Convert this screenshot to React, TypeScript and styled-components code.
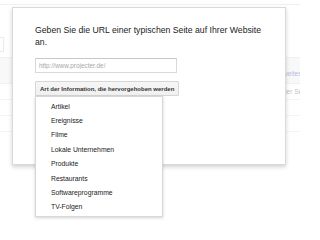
import React from 'react';
import styled, {createGlobalStyle} from "styled-components";

const GlobalStyle = createGlobalStyle`
  html, body {
    margin: 0;
    padding: 0;
    width: 300px;
    height: 223px;
    overflow: hidden;
    background: #ffffff;
  }
  body {
    font-family: "Liberation Sans", Arial, sans-serif;
  }
`

const types = [
    "Artikel",
    "Ereignisse",
    "Filme",
    "Lokale Unternehmen",
    "Produkte",
    "Restaurants",
    "Softwareprogramme",
    "TV-Folgen",
];

export default function App() {
    return (
        <Page>
            <GlobalStyle/>
            <TopBar/>
            <SearchRow><SearchStub/></SearchRow>
            <Band><Peek color={"#b7bce6"}>weitere</Peek></Band>
            <Row><Peek color={"#c2c2c2"}>der Seite</Peek></Row>
            <Row/>
            <Row/>

            <Dialog>
                <Title>Geben Sie die URL einer typischen Seite auf Ihrer Website an.</Title>
                <UrlInput placeholder={"http://www.projecter.de/"}/>
                <MenuWrap>
                    <MenuButton>Art der Information, die hervorgehoben werden</MenuButton>
                    <Menu>
                        {types.map(t => <MenuItem key={t}>{t}</MenuItem>)}
                    </Menu>
                </MenuWrap>
            </Dialog>
        </Page>
    );
}

const Page = styled.div`
  position: relative;
  width: 300px;
  height: 223px;
  overflow: hidden;
`

const TopBar = styled.div`
  height: 4px;
  border-bottom: 1px solid #f0f0f0;
`

const SearchRow = styled.div`
  display: flex;
  margin-top: 32px;
  height: 15px;
`

const SearchStub = styled.div`
  width: 3px;
  height: 13px;
  border: 1px solid #ebebeb;
  border-left: none;
`

const Band = styled.div`
  display: flex;
  align-items: flex-end;
  margin-top: 5px;
  height: 27px;
  padding-bottom: 6px;
  box-sizing: border-box;
  background: #f8f8f8;
  border-top: 1px solid #f1f1f1;
  border-bottom: 1px solid #f1f1f1;
`

const Row = styled.div`
  display: flex;
  align-items: center;
  height: 15px;
  border-bottom: 1px solid #f4f4f4;
`

const Peek = styled.span<{color: string}>`
  padding-left: 283px;
  white-space: nowrap;
  font-size: 6.5px;
  color: ${p => p.color};
`

const Dialog = styled.div`
  position: absolute;
  top: 7px;
  left: 12px;
  width: 274px;
  height: 158px;
  box-sizing: border-box;
  padding: 16px 22px;
  background: #ffffff;
  border: 1px solid #dadada;
  box-shadow: 0 2px 4px rgba(0, 0, 0, 0.18);
  display: flex;
  flex-direction: column;
  align-items: flex-start;
`

const Title = styled.div`
  font-size: 8.7px;
  line-height: 12px;
  color: #222222;
  margin-bottom: 10px;
`

const UrlInput = styled.input`
  width: 142px;
  height: 15px;
  box-sizing: border-box;
  margin: 0 0 8px;
  padding: 0 3px;
  border: 1px solid #d9d9d9;
  border-top-color: #c8c8c8;
  font-family: inherit;
  font-size: 6.4px;
  color: #222;
  outline: none;

  &::placeholder {
    color: #a8a8a8;
  }
`

const MenuWrap = styled.div`
  position: relative;
`

const MenuButton = styled.div`
  height: 15px;
  box-sizing: border-box;
  padding: 0 4px;
  display: flex;
  align-items: center;
  font-size: 6px;
  font-weight: 700;
  color: #333333;
  white-space: nowrap;
  background: linear-gradient(#f6f6f6, #f0f0f0);
  border: 1px solid #d6d6d6;
  border-radius: 1px;
`

const Menu = styled.div`
  position: absolute;
  top: 100%;
  left: 0;
  width: 128px;
  padding: 2px 0;
  background: #ffffff;
  border: 1px solid #d8d8d8;
  box-sizing: border-box;
  box-shadow: 0 1px 3px rgba(0, 0, 0, 0.18);
  z-index: 2;
`

const MenuItem = styled.div`
  height: 14.4px;
  display: flex;
  align-items: center;
  padding-left: 15px;
  font-size: 6.8px;
  color: #222222;
`
